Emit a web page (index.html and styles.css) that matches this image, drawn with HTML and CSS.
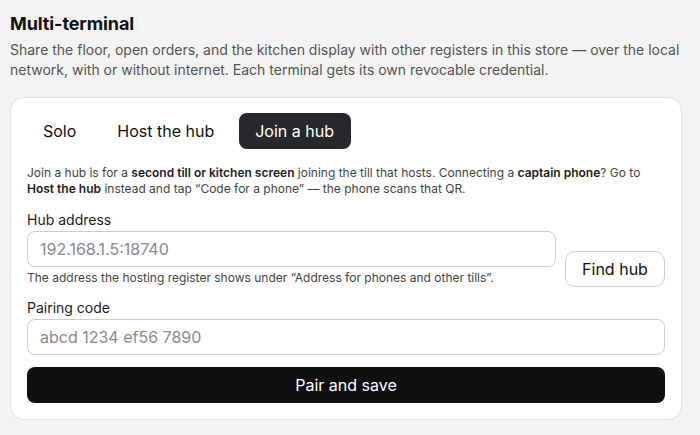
FILE: index.html
```html
<!DOCTYPE html>
<html lang="en">
<head>
<meta charset="utf-8">
<title>Multi-terminal</title>
<link rel="stylesheet" href="styles.css">
</head>
<body>
<main class="page">
  <h1 class="title">Multi-terminal</h1>
  <p class="desc">Share the floor, open orders, and the kitchen display with other registers in this store — over the local network, with or without internet. Each terminal gets its own revocable credential.</p>
  <section class="card">
    <div class="tabs">
      <button class="tab">Solo</button>
      <button class="tab">Host the hub</button>
      <button class="tab active">Join a hub</button>
    </div>
    <p class="note">Join a hub is for a <b>second till or kitchen screen</b> joining the till that hosts. Connecting a <b>captain phone</b>? Go to <b>Host the hub</b> instead and tap “Code for a phone” — the phone scans that QR.</p>
    <div class="hub-row">
      <div class="field grow">
        <label class="label">Hub address</label>
        <input class="input" placeholder="192.168.1.5:18740">
        <p class="hint">The address the hosting register shows under “Address for phones and other tills”.</p>
      </div>
      <button class="btn-outline">Find hub</button>
    </div>
    <div class="field">
      <label class="label">Pairing code</label>
      <input class="input" placeholder="abcd 1234 ef56 7890">
    </div>
    <button class="btn-primary">Pair and save</button>
  </section>
</main>
</body>
</html>
```

FILE: styles.css
```css
* { box-sizing: border-box; }
html, body { margin: 0; padding: 0; }
body {
  background: #f3f3f3;
  font-family: Inter, "Noto Sans", sans-serif;
  color: #111;
}
.page {
  padding: 12px 18px 16px 10px;
}
.title {
  margin: 0;
  font-size: 18px;
  line-height: 24px;
  font-weight: 700;
  color: #111;
  letter-spacing: -0.1px;
}
.desc {
  margin: 4px 0 0;
  font-size: 14px;
  line-height: 20px;
  color: #555;
}
.card {
  margin-top: 17px;
  background: #fff;
  border: 1px solid #e2e2e2;
  border-radius: 14px;
  padding: 15px 16px 16px 16px;
  display: flex;
  flex-direction: column;
}
.tabs {
  display: flex;
  gap: 8px;
}
.tab {
  font-family: inherit;
  font-size: 16px;
  height: 36px;
  padding: 0 16.5px;
  border: 0;
  border-radius: 8px;
  background: transparent;
  color: #111;
}
.tab:first-child { margin-left: -0.5px; }
.tab.active {
  background: #27282b;
  color: #fff;
}
.note {
  margin: 16px 0 0;
  font-size: 12px;
  line-height: 16px;
  color: #444;
}
.note b { color: #222; font-weight: 600; }
.hub-row {
  margin-top: 13px;
  display: flex;
  align-items: flex-end;
  gap: 9px;
}
.field {
  display: flex;
  flex-direction: column;
}
.grow { flex: 1; }
.label {
  font-size: 14px;
  line-height: 20px;
  color: #222;
  margin-bottom: 1px;
}
.input {
  font-family: inherit;
  font-size: 16px;
  height: 36px;
  padding: 0 12px;
  border: 1px solid #cdcdcd;
  border-radius: 8px;
  background: #fff;
  color: #111;
}
.input::placeholder { color: #8a8a8a; }
.hint {
  margin: 3px 0 0;
  font-size: 12px;
  line-height: 16px;
  color: #444;
}
.btn-outline {
  font-family: inherit;
  font-size: 16px;
  width: 100px;
  height: 36px;
  border: 1px solid #cdcdcd;
  border-radius: 10px;
  background: #fff;
  color: #111;
  margin-bottom: -1px;
}
.hub-row + .field { margin-top: 12px; }
.btn-primary {
  margin-top: 12px;
  font-family: inherit;
  font-size: 16px;
  height: 36px;
  border: 0;
  border-radius: 8px;
  background: #0e0f11;
  color: #fff;
}
```
